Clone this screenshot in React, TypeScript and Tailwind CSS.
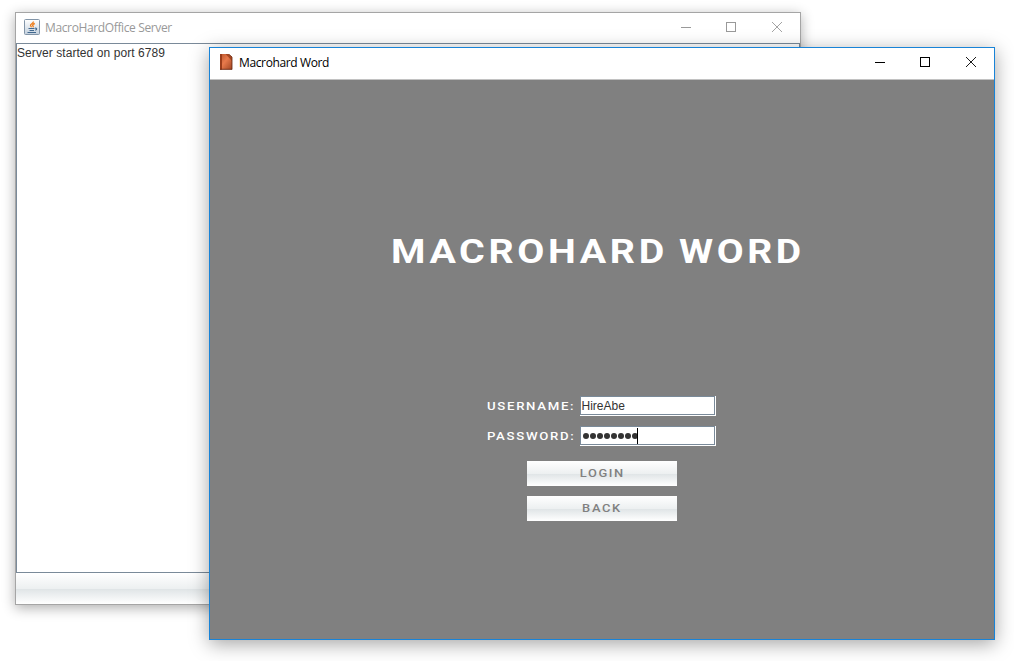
import React from 'react';

function Controls({ className }: { className: string }) {
  return (
    <div className={`ml-auto flex ${className}`}>
      <svg width="46" height="30" viewBox="0 0 46 30" shapeRendering="crispEdges"><path d="M18 14.5h10" stroke="currentColor" /></svg>
      <svg width="45" height="30" viewBox="0 0 45 30" shapeRendering="crispEdges"><path d="M17.5 9.5h9v9h-9z" fill="none" stroke="currentColor" /></svg>
      <svg width="46" height="30" viewBox="0 0 46 30"><path d="M18 9l10 10M28 9l-10 10" stroke="currentColor" strokeWidth=".9" /></svg>
    </div>
  );
}

function JavaIcon() {
  return (
    <svg width="16" height="16" viewBox="0 0 16 16" className="mb-[2px] shrink-0">
      <defs>
        <linearGradient id="tile" x2="0" y2="1">
          <stop stopColor="#fff" />
          <stop offset="1" stopColor="#c3d0dd" />
        </linearGradient>
      </defs>
      <rect x=".5" y=".5" width="15" height="15" rx="1" fill="url(#tile)" stroke="#8295a8" />
      <path d="M9.500 2.500C9.500 4.500 6 5 6.500 6.500c.2.800 1 1 1 1.800M10.800 4.500C9 5 8 6 9 7c.4.500.2 1-.2 1.300" fill="none" stroke="#ee7d1b" strokeWidth="1.300" />
      <path d="M4.500 9.500h6M5.500 11.500h4.500M3.500 13.500h8.500M11 9.200c2-.5 2.500 1.300.2 2" fill="none" stroke="#42698f" strokeWidth="1.100" />
    </svg>
  );
}

function WordIcon() {
  return (
    <svg width="13" height="16" viewBox="0 0 13 16" className="mb-[2px] shrink-0">
      <defs>
        <linearGradient id="copper" x2="1" y2="1">
          <stop stopColor="#b8532b" />
          <stop offset=".45" stopColor="#e87a4c" />
          <stop offset="1" stopColor="#a04522" />
        </linearGradient>
      </defs>
      <path d="M0 0h8.500l3.500 3v12.500H0z" fill="url(#copper)" />
      <path d="M0 0h2v15.500H0z" fill="#9a3d1b" />
      <path d="M8.500 0l3.500 3v12.500M0 15.300h12" fill="none" stroke="#5f210d" strokeWidth=".8" />
      <path d="M5.500 0l6.500 7V3L8.500 0z" fill="#8a3414" opacity=".7" />
    </svg>
  );
}

function Field({ children }: { children: React.ReactNode }) {
  return (
    <div className="h-5 w-[136px] border-r border-b border-white">
      <div className="flex h-[19px] items-center border border-[#7a8a99] bg-white pl-px font-['Liberation_Sans',sans-serif] text-xs font-normal text-[#333]">
        {children}
      </div>
    </div>
  );
}

const wide = "inline-block whitespace-nowrap font-['Roboto',sans-serif]";

export default function App() {
  return (
    <div className="relative h-[661px] w-[1014px] overflow-hidden bg-white">
      <section className="absolute top-3 left-[15px] flex h-[593px] w-[786px] flex-col border border-[#a5a5a5] bg-white shadow-[0_3px_12px_rgba(0,0,0,0.32)]">
        <header className="flex h-[30px] shrink-0 items-center pl-2">
          <JavaIcon />
          <span className="ml-[5px] font-['Open_Sans',sans-serif] text-xs tracking-[-0.37px] text-[#999]">MacroHardOffice Server</span>
          <Controls className="text-[#999]" />
        </header>
        <main className="h-[530px] border border-[#7a8a99] font-['Liberation_Sans',sans-serif] text-xs leading-[18px] tracking-[0.07px] text-[#333]">
          Server started on port 6789
        </main>
        <footer className="flex-1 bg-linear-[180deg,#fff_0%,#edf0f1_50%,#dfe4e6_51%,#fff_100%]" />
      </section>

      <section className="absolute top-[47px] left-[209px] flex h-[593px] w-[786px] flex-col border border-[#1883d7] bg-[#808080] shadow-[0_4px_18px_rgba(0,0,0,0.36)]">
        <header className="flex h-8 shrink-0 items-start border-b border-[#c2c2c2] bg-white pl-[10px]">
          <div className="flex h-[30px] items-center">
            <WordIcon />
            <span className="ml-[6px] font-['Open_Sans',sans-serif] text-xs tracking-[-0.37px] text-black">Macrohard Word</span>
          </div>
          <Controls className="text-black" />
        </header>
        <main className="flex flex-1 flex-col items-center">
          <h1 className="mt-[152px] mr-[8px] flex h-10 w-[414px] items-center justify-between text-[32.5px] font-bold text-white">
            <span className="block w-[274px]"><span className={`${wide} origin-left scale-x-[1.21] tracking-[3px]`}>MACROHARD</span></span>
            <span className="block w-[126px]"><span className={`${wide} origin-left scale-x-[1.2] tracking-[3px]`}>WORD</span></span>
          </h1>
          <form className="mt-[124px] flex w-[229px] flex-col gap-[10px] text-[11px] font-medium text-white">
            <label className="-ml-px flex h-5 w-[229px] items-center justify-between">
              <span className={`${wide} origin-left scale-x-[1.2] pt-[2px] tracking-[1.4px]`}>USERNAME:</span>
              <Field><span className="pt-px">HireAbe</span></Field>
            </label>
            <label className="-ml-px flex h-5 w-[229px] items-center justify-between">
              <span className={`${wide} origin-left scale-x-[1.2] pt-[2px] tracking-[1.4px]`}>PASSWORD:</span>
              <Field>
                <span className="flex gap-px pl-px">
                  {Array.from({ length: 8 }, (_, i) => <i key={i} className="size-[6px] rounded-full bg-[#333]" />)}
                </span>
                <i className="-ml-px h-4 w-px bg-black" />
              </Field>
            </label>
          </form>
          <div className="mt-[15px] flex flex-col gap-[10px] text-[11px] font-medium text-[#808080]">
            <button className="h-[25px] w-[150px] bg-linear-[180deg,#fff_0%,#edf0f1_50%,#dfe4e6_51%,#fff_100%]"><span className={`${wide} scale-x-[1.17] tracking-[1.4px]`}>LOGIN</span></button>
            <button className="h-[25px] w-[150px] bg-linear-[180deg,#fff_0%,#edf0f1_50%,#dfe4e6_51%,#fff_100%]"><span className={`${wide} scale-x-[1.17] tracking-[1.4px]`}>BACK</span></button>
          </div>
        </main>
      </section>
    </div>
  );
}
